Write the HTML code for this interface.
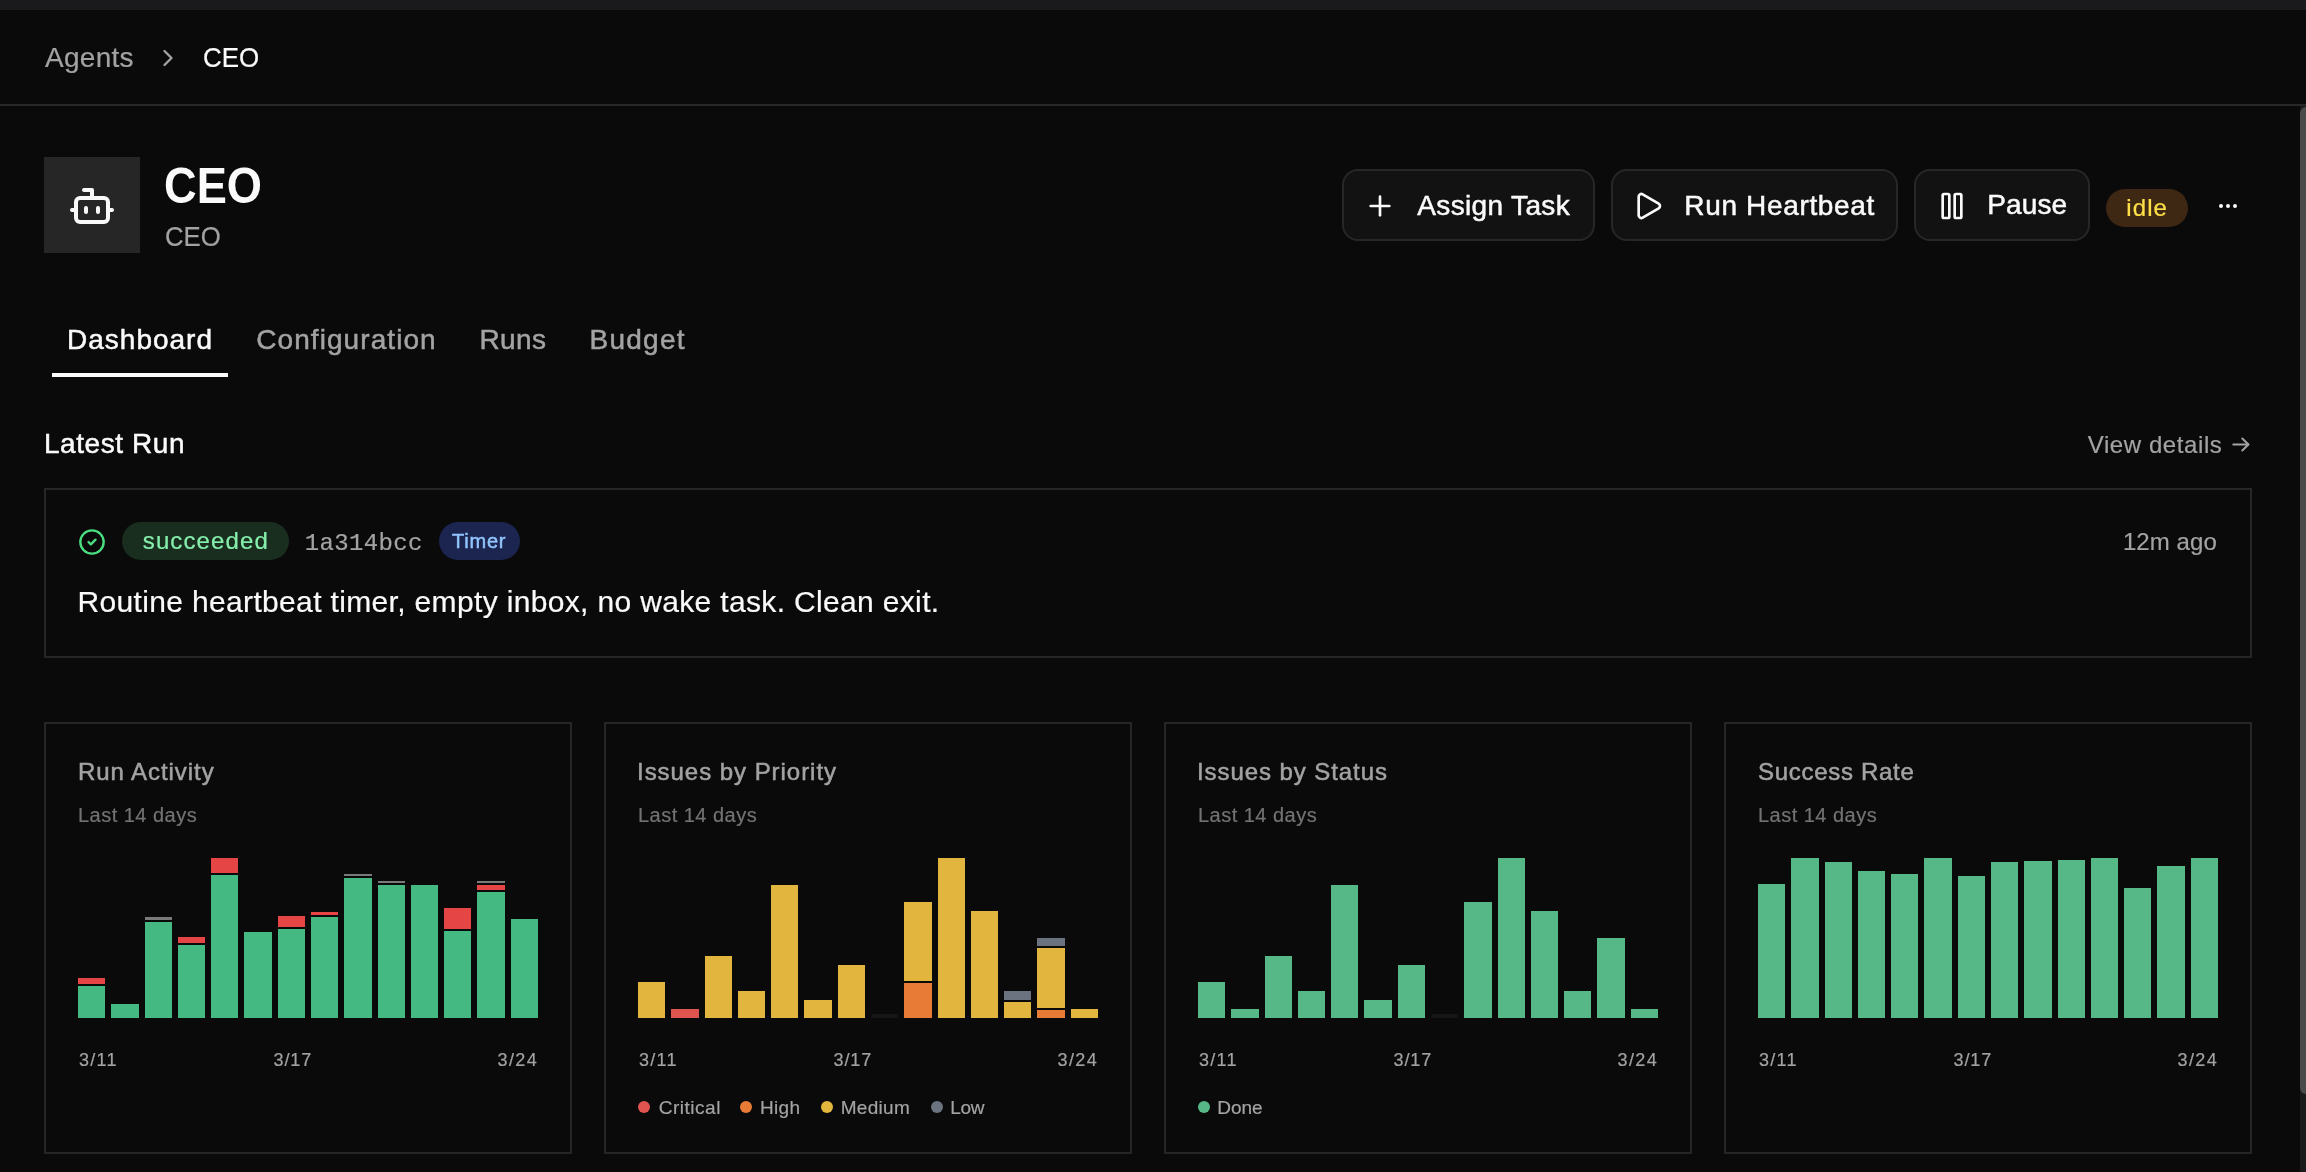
<!DOCTYPE html>
<html><head><meta charset="utf-8"><title>CEO - Agents</title>
<style>
html,body{margin:0;padding:0;width:2306px;height:1172px;overflow:hidden;background:#0a0a0a;}
body{position:relative;font-family:'Liberation Sans', sans-serif;}
.r,.t,.i{position:absolute;}
.t{white-space:nowrap;}
.txt{position:absolute;left:0;top:0;width:2306px;height:1172px;will-change:transform;}
</style></head><body>
<div class="r" style="left:0px;top:0px;width:2306px;height:10px;background:#1a1a1c;"></div>
<div class="r" style="left:0px;top:104px;width:2306px;height:2px;background:#282828;"></div>
<div class="r" style="left:2300px;top:106px;width:6px;height:1066px;background:#1a1a1a;"></div>
<div class="r" style="left:2300px;top:107px;width:12px;height:987px;background:#4a4a4a;border-radius:6px"></div>
<div class="r" style="left:44px;top:157px;width:96px;height:96px;background:#262626;"></div>
<div class="r" style="left:1342px;top:169px;width:253px;height:72px;background:#121212;border:2px solid #272727;border-radius:16px;box-sizing:border-box"></div>
<div class="r" style="left:1611px;top:169px;width:287px;height:72px;background:#121212;border:2px solid #272727;border-radius:16px;box-sizing:border-box"></div>
<div class="r" style="left:1914px;top:169px;width:176px;height:72px;background:#121212;border:2px solid #272727;border-radius:16px;box-sizing:border-box"></div>
<div class="r" style="left:2106px;top:189px;width:82px;height:38px;background:#3e2713;border-radius:19px"></div>
<div class="r" style="left:52px;top:373px;width:176px;height:4px;background:#fafafa;"></div>
<div class="r" style="left:44px;top:488px;width:2208px;height:170px;background:transparent;border:2px solid #262626;box-sizing:border-box"></div>
<div class="r" style="left:122px;top:522px;width:167px;height:38px;background:#1a2e1f;border-radius:19px"></div>
<div class="r" style="left:439px;top:522px;width:81px;height:38px;background:#1b2550;border-radius:19px"></div>
<div class="r" style="left:44px;top:722px;width:528px;height:432px;background:transparent;border:2px solid #262626;box-sizing:border-box"></div>
<div class="r" style="left:604px;top:722px;width:528px;height:432px;background:transparent;border:2px solid #262626;box-sizing:border-box"></div>
<div class="r" style="left:1164px;top:722px;width:528px;height:432px;background:transparent;border:2px solid #262626;box-sizing:border-box"></div>
<div class="r" style="left:1724px;top:722px;width:528px;height:432px;background:transparent;border:2px solid #262626;box-sizing:border-box"></div>
<div class="r" style="left:78px;top:986px;width:27px;height:32px;background:#44b982;"></div>
<div class="r" style="left:78px;top:978px;width:27px;height:6px;background:#e64545;"></div>
<div class="r" style="left:111px;top:1004px;width:28px;height:14px;background:#44b982;"></div>
<div class="r" style="left:145px;top:922px;width:27px;height:96px;background:#44b982;"></div>
<div class="r" style="left:145px;top:917px;width:27px;height:3px;background:#7a7a7a;"></div>
<div class="r" style="left:178px;top:945px;width:27px;height:73px;background:#44b982;"></div>
<div class="r" style="left:178px;top:937px;width:27px;height:6px;background:#e64545;"></div>
<div class="r" style="left:211px;top:875px;width:27px;height:143px;background:#44b982;"></div>
<div class="r" style="left:211px;top:858px;width:27px;height:15px;background:#e64545;"></div>
<div class="r" style="left:244px;top:932px;width:28px;height:86px;background:#44b982;"></div>
<div class="r" style="left:278px;top:929px;width:27px;height:89px;background:#44b982;"></div>
<div class="r" style="left:278px;top:916px;width:27px;height:11px;background:#e64545;"></div>
<div class="r" style="left:311px;top:917px;width:27px;height:101px;background:#44b982;"></div>
<div class="r" style="left:311px;top:912px;width:27px;height:3px;background:#e64545;"></div>
<div class="r" style="left:344px;top:878px;width:28px;height:140px;background:#44b982;"></div>
<div class="r" style="left:344px;top:874px;width:28px;height:2px;background:#7a7a7a;"></div>
<div class="r" style="left:378px;top:885px;width:27px;height:133px;background:#44b982;"></div>
<div class="r" style="left:378px;top:881px;width:27px;height:2px;background:#7a7a7a;"></div>
<div class="r" style="left:411px;top:885px;width:27px;height:133px;background:#44b982;"></div>
<div class="r" style="left:444px;top:931px;width:27px;height:87px;background:#44b982;"></div>
<div class="r" style="left:444px;top:908px;width:27px;height:21px;background:#e64545;"></div>
<div class="r" style="left:477px;top:892px;width:28px;height:126px;background:#44b982;"></div>
<div class="r" style="left:477px;top:885px;width:28px;height:5px;background:#e64545;"></div>
<div class="r" style="left:477px;top:881px;width:28px;height:2px;background:#7a7a7a;"></div>
<div class="r" style="left:511px;top:919px;width:27px;height:99px;background:#44b982;"></div>
<div class="r" style="left:638px;top:982px;width:27px;height:36px;background:#e2b53f;"></div>
<div class="r" style="left:671px;top:1009px;width:28px;height:9px;background:#e05450;"></div>
<div class="r" style="left:705px;top:956px;width:27px;height:62px;background:#e2b53f;"></div>
<div class="r" style="left:738px;top:991px;width:27px;height:27px;background:#e2b53f;"></div>
<div class="r" style="left:771px;top:885px;width:27px;height:133px;background:#e2b53f;"></div>
<div class="r" style="left:804px;top:1000px;width:28px;height:18px;background:#e2b53f;"></div>
<div class="r" style="left:838px;top:965px;width:27px;height:53px;background:#e2b53f;"></div>
<div class="r" style="left:871px;top:1014px;width:27px;height:4px;background:#161616;border-radius:2px"></div>
<div class="r" style="left:904px;top:983px;width:28px;height:35px;background:#e87b35;"></div>
<div class="r" style="left:904px;top:902px;width:28px;height:79px;background:#e2b53f;"></div>
<div class="r" style="left:938px;top:858px;width:27px;height:160px;background:#e2b53f;"></div>
<div class="r" style="left:971px;top:911px;width:27px;height:107px;background:#e2b53f;"></div>
<div class="r" style="left:1004px;top:1002px;width:27px;height:16px;background:#e2b53f;"></div>
<div class="r" style="left:1004px;top:991px;width:27px;height:9px;background:#6b7280;"></div>
<div class="r" style="left:1037px;top:1010px;width:28px;height:8px;background:#e87b35;"></div>
<div class="r" style="left:1037px;top:948px;width:28px;height:60px;background:#e2b53f;"></div>
<div class="r" style="left:1037px;top:938px;width:28px;height:8px;background:#6b7280;"></div>
<div class="r" style="left:1071px;top:1009px;width:27px;height:9px;background:#e2b53f;"></div>
<div class="r" style="left:1198px;top:982px;width:27px;height:36px;background:#56b886;"></div>
<div class="r" style="left:1231px;top:1009px;width:28px;height:9px;background:#56b886;"></div>
<div class="r" style="left:1265px;top:956px;width:27px;height:62px;background:#56b886;"></div>
<div class="r" style="left:1298px;top:991px;width:27px;height:27px;background:#56b886;"></div>
<div class="r" style="left:1331px;top:885px;width:27px;height:133px;background:#56b886;"></div>
<div class="r" style="left:1364px;top:1000px;width:28px;height:18px;background:#56b886;"></div>
<div class="r" style="left:1398px;top:965px;width:27px;height:53px;background:#56b886;"></div>
<div class="r" style="left:1431px;top:1014px;width:27px;height:4px;background:#161616;border-radius:2px"></div>
<div class="r" style="left:1464px;top:902px;width:28px;height:116px;background:#56b886;"></div>
<div class="r" style="left:1498px;top:858px;width:27px;height:160px;background:#56b886;"></div>
<div class="r" style="left:1531px;top:911px;width:27px;height:107px;background:#56b886;"></div>
<div class="r" style="left:1564px;top:991px;width:27px;height:27px;background:#56b886;"></div>
<div class="r" style="left:1597px;top:938px;width:28px;height:80px;background:#56b886;"></div>
<div class="r" style="left:1631px;top:1009px;width:27px;height:9px;background:#56b886;"></div>
<div class="r" style="left:1758px;top:884px;width:27px;height:134px;background:#56b886;"></div>
<div class="r" style="left:1791px;top:858px;width:28px;height:160px;background:#56b886;"></div>
<div class="r" style="left:1825px;top:862px;width:27px;height:156px;background:#56b886;"></div>
<div class="r" style="left:1858px;top:871px;width:27px;height:147px;background:#56b886;"></div>
<div class="r" style="left:1891px;top:874px;width:27px;height:144px;background:#56b886;"></div>
<div class="r" style="left:1924px;top:858px;width:28px;height:160px;background:#56b886;"></div>
<div class="r" style="left:1958px;top:876px;width:27px;height:142px;background:#56b886;"></div>
<div class="r" style="left:1991px;top:862px;width:27px;height:156px;background:#56b886;"></div>
<div class="r" style="left:2024px;top:861px;width:28px;height:157px;background:#56b886;"></div>
<div class="r" style="left:2058px;top:860px;width:27px;height:158px;background:#56b886;"></div>
<div class="r" style="left:2091px;top:858px;width:27px;height:160px;background:#56b886;"></div>
<div class="r" style="left:2124px;top:888px;width:27px;height:130px;background:#56b886;"></div>
<div class="r" style="left:2157px;top:866px;width:28px;height:152px;background:#56b886;"></div>
<div class="r" style="left:2191px;top:858px;width:27px;height:160px;background:#56b886;"></div>
<div class="r" style="left:638px;top:1101px;width:12px;height:12px;background:#e05450;border-radius:50%"></div>
<div class="r" style="left:740px;top:1101px;width:12px;height:12px;background:#e87b35;border-radius:50%"></div>
<div class="r" style="left:821px;top:1101px;width:12px;height:12px;background:#e2b53f;border-radius:50%"></div>
<div class="r" style="left:931px;top:1101px;width:12px;height:12px;background:#6b7280;border-radius:50%"></div>
<div class="r" style="left:1198px;top:1101px;width:12px;height:12px;background:#56b886;border-radius:50%"></div>
<svg class="i" style="left:153.5px;top:44.2px" width="28" height="28" viewBox="0 0 24 24" fill="none" stroke="#a3a3a3" stroke-width="2" stroke-linecap="round" stroke-linejoin="round"><path d="m9 18 6-6-6-6"/></svg>
<svg class="i" style="left:68px;top:182px" width="48" height="48" viewBox="0 0 24 24" fill="none" stroke="#fafafa" stroke-width="2" stroke-linecap="round" stroke-linejoin="round"><path d="M12 8V4H8"/><rect width="16" height="12" x="4" y="8" rx="2"/><path d="M2 14h2"/><path d="M20 14h2"/><path d="M15 13v2"/><path d="M9 13v2"/></svg>
<svg class="i" style="left:1364px;top:190px" width="32" height="32" viewBox="0 0 24 24" fill="none" stroke="#fafafa" stroke-width="2" stroke-linecap="round" stroke-linejoin="round"><path d="M5 12h14"/><path d="M12 5v14"/></svg>
<svg class="i" style="left:1632px;top:190px" width="32" height="32" viewBox="0 0 24 24" fill="none" stroke="#fafafa" stroke-width="2" stroke-linecap="round" stroke-linejoin="round"><path d="M5 5a2 2 0 0 1 3.008-1.728l11.997 6.998a2 2 0 0 1 .003 3.458l-12 7A2 2 0 0 1 5 19z"/></svg>
<svg class="i" style="left:1936px;top:190px" width="32" height="32" viewBox="0 0 24 24" fill="none" stroke="#fafafa" stroke-width="2" stroke-linecap="round" stroke-linejoin="round"><rect x="14" y="3" width="5" height="18" rx="1"/><rect x="5" y="3" width="5" height="18" rx="1"/></svg>
<svg class="i" style="left:2216px;top:194px" width="24" height="24" viewBox="0 0 24 24" fill="none" stroke="#fafafa" stroke-width="2" stroke-linecap="round" stroke-linejoin="round"><circle cx="12" cy="12" r="1"/><circle cx="19" cy="12" r="1"/><circle cx="5" cy="12" r="1"/></svg>
<svg class="i" style="left:78px;top:528px" width="28" height="28" viewBox="0 0 24 24" fill="none" stroke="#4ade80" stroke-width="2" stroke-linecap="round" stroke-linejoin="round"><circle cx="12" cy="12" r="10"/><path d="m9 12 2 2 4-4"/></svg>
<svg class="i" style="left:2225px;top:430px" width="30" height="30" viewBox="0 0 30 30" fill="none" stroke="#a3a3a3" stroke-width="2" stroke-linecap="round" stroke-linejoin="round"><path d="M8.3 14.5H23.3"/><path d="M17.3 8.5 23.4 14.5 17.3 20.5"/></svg>
<div class="txt">
<div class="t" style="left:45.00px;top:43.50px;font:400 28px/28px 'Liberation Sans', sans-serif;color:#a3a3a3;letter-spacing:0.286px;-webkit-text-stroke:0.2px #a3a3a3">Agents</div>
<div class="t" style="left:202.57px;top:43.70px;font:400 28px/28px 'Liberation Sans', sans-serif;color:#fafafa;transform:scaleX(0.9254);transform-origin:0 0;-webkit-text-stroke:0.2px #fafafa">CEO</div>
<div class="t" style="left:164.09px;top:160.60px;font:700 50px/50px 'Liberation Sans', sans-serif;color:#fafafa;transform:scaleX(0.9047);transform-origin:0 0">CEO</div>
<div class="t" style="left:164.68px;top:222.80px;font:400 28px/28px 'Liberation Sans', sans-serif;color:#a3a3a3;transform:scaleX(0.9203);transform-origin:0 0;-webkit-text-stroke:0.2px #a3a3a3">CEO</div>
<div class="t" style="left:1417.30px;top:191.60px;font:400 28px/28px 'Liberation Sans', sans-serif;color:#fafafa;letter-spacing:0.351px;-webkit-text-stroke:0.5px #fafafa">Assign Task</div>
<div class="t" style="left:1684.30px;top:191.80px;font:400 28px/28px 'Liberation Sans', sans-serif;color:#fafafa;letter-spacing:0.656px;-webkit-text-stroke:0.5px #fafafa">Run Heartbeat</div>
<div class="t" style="left:1987.20px;top:191.40px;font:400 28px/28px 'Liberation Sans', sans-serif;color:#fafafa;letter-spacing:0.145px;-webkit-text-stroke:0.5px #fafafa">Pause</div>
<div class="t" style="left:2126.30px;top:196.40px;font:400 24px/24px 'Liberation Sans', sans-serif;color:#fde047;letter-spacing:1.096px;-webkit-text-stroke:0.2px #fde047">idle</div>
<div class="t" style="left:67.10px;top:326.20px;font:400 28px/28px 'Liberation Sans', sans-serif;color:#fafafa;letter-spacing:0.987px;-webkit-text-stroke:0.5px #fafafa">Dashboard</div>
<div class="t" style="left:256.20px;top:326.20px;font:400 28px/28px 'Liberation Sans', sans-serif;color:#a3a3a3;letter-spacing:1.077px;-webkit-text-stroke:0.5px #a3a3a3">Configuration</div>
<div class="t" style="left:479.40px;top:326.30px;font:400 28px/28px 'Liberation Sans', sans-serif;color:#a3a3a3;letter-spacing:0.378px;-webkit-text-stroke:0.5px #a3a3a3">Runs</div>
<div class="t" style="left:589.60px;top:326.30px;font:400 28px/28px 'Liberation Sans', sans-serif;color:#a3a3a3;letter-spacing:1.227px;-webkit-text-stroke:0.5px #a3a3a3">Budget</div>
<div class="t" style="left:43.90px;top:430.00px;font:400 28px/28px 'Liberation Sans', sans-serif;color:#fafafa;letter-spacing:0.584px;-webkit-text-stroke:0.5px #fafafa">Latest Run</div>
<div class="t" style="left:2087.80px;top:432.50px;font:400 24px/24px 'Liberation Sans', sans-serif;color:#a3a3a3;letter-spacing:0.579px;-webkit-text-stroke:0.2px #a3a3a3">View details</div>
<div class="t" style="left:142.80px;top:529.40px;font:400 24px/24px 'Liberation Sans', sans-serif;color:#86efac;letter-spacing:1.108px;-webkit-text-stroke:0.2px #86efac">succeeded</div>
<div class="t" style="left:304.70px;top:531.60px;font:400 24px/24px 'Liberation Mono', monospace;color:#a3a3a3;letter-spacing:0.355px;-webkit-text-stroke:0.2px #a3a3a3">1a314bcc</div>
<div class="t" style="left:452.10px;top:530.90px;font:400 20px/20px 'Liberation Sans', sans-serif;color:#93c5fd;letter-spacing:0.750px;-webkit-text-stroke:0.5px #93c5fd">Timer</div>
<div class="t" style="left:2122.90px;top:529.50px;font:400 24px/24px 'Liberation Sans', sans-serif;color:#a3a3a3;letter-spacing:0.075px;-webkit-text-stroke:0.2px #a3a3a3">12m ago</div>
<div class="t" style="left:77.50px;top:586.80px;font:400 30px/30px 'Liberation Sans', sans-serif;color:#fafafa;letter-spacing:0.342px;-webkit-text-stroke:0.2px #fafafa">Routine heartbeat timer, empty inbox, no wake task. Clean exit.</div>
<div class="t" style="left:78.00px;top:759.60px;font:400 24px/24px 'Liberation Sans', sans-serif;color:#a3a3a3;letter-spacing:0.936px;-webkit-text-stroke:0.5px #a3a3a3">Run Activity</div>
<div class="t" style="left:78.00px;top:805.20px;font:400 20px/20px 'Liberation Sans', sans-serif;color:#737373;letter-spacing:0.481px;-webkit-text-stroke:0.2px #737373">Last 14 days</div>
<div class="t" style="left:79.00px;top:1051.00px;font:400 18px/18px 'Liberation Sans', sans-serif;color:#a3a3a3;letter-spacing:1.238px;-webkit-text-stroke:0.2px #a3a3a3">3/11</div>
<div class="t" style="left:273.50px;top:1051.00px;font:400 18px/18px 'Liberation Sans', sans-serif;color:#a3a3a3;letter-spacing:0.893px;-webkit-text-stroke:0.2px #a3a3a3">3/17</div>
<div class="t" style="left:497.50px;top:1051.00px;font:400 18px/18px 'Liberation Sans', sans-serif;color:#a3a3a3;letter-spacing:1.426px;-webkit-text-stroke:0.2px #a3a3a3">3/24</div>
<div class="t" style="left:637.00px;top:759.60px;font:400 24px/24px 'Liberation Sans', sans-serif;color:#a3a3a3;letter-spacing:0.958px;-webkit-text-stroke:0.5px #a3a3a3">Issues by Priority</div>
<div class="t" style="left:638.00px;top:805.20px;font:400 20px/20px 'Liberation Sans', sans-serif;color:#737373;letter-spacing:0.481px;-webkit-text-stroke:0.2px #737373">Last 14 days</div>
<div class="t" style="left:639.00px;top:1051.00px;font:400 18px/18px 'Liberation Sans', sans-serif;color:#a3a3a3;letter-spacing:1.238px;-webkit-text-stroke:0.2px #a3a3a3">3/11</div>
<div class="t" style="left:833.50px;top:1051.00px;font:400 18px/18px 'Liberation Sans', sans-serif;color:#a3a3a3;letter-spacing:0.893px;-webkit-text-stroke:0.2px #a3a3a3">3/17</div>
<div class="t" style="left:1057.50px;top:1051.00px;font:400 18px/18px 'Liberation Sans', sans-serif;color:#a3a3a3;letter-spacing:1.426px;-webkit-text-stroke:0.2px #a3a3a3">3/24</div>
<div class="t" style="left:1197.00px;top:759.60px;font:400 24px/24px 'Liberation Sans', sans-serif;color:#a3a3a3;letter-spacing:0.921px;-webkit-text-stroke:0.5px #a3a3a3">Issues by Status</div>
<div class="t" style="left:1198.00px;top:805.20px;font:400 20px/20px 'Liberation Sans', sans-serif;color:#737373;letter-spacing:0.481px;-webkit-text-stroke:0.2px #737373">Last 14 days</div>
<div class="t" style="left:1199.00px;top:1051.00px;font:400 18px/18px 'Liberation Sans', sans-serif;color:#a3a3a3;letter-spacing:1.238px;-webkit-text-stroke:0.2px #a3a3a3">3/11</div>
<div class="t" style="left:1393.50px;top:1051.00px;font:400 18px/18px 'Liberation Sans', sans-serif;color:#a3a3a3;letter-spacing:0.893px;-webkit-text-stroke:0.2px #a3a3a3">3/17</div>
<div class="t" style="left:1617.50px;top:1051.00px;font:400 18px/18px 'Liberation Sans', sans-serif;color:#a3a3a3;letter-spacing:1.426px;-webkit-text-stroke:0.2px #a3a3a3">3/24</div>
<div class="t" style="left:1758.00px;top:759.60px;font:400 24px/24px 'Liberation Sans', sans-serif;color:#a3a3a3;letter-spacing:0.698px;-webkit-text-stroke:0.5px #a3a3a3">Success Rate</div>
<div class="t" style="left:1758.00px;top:805.20px;font:400 20px/20px 'Liberation Sans', sans-serif;color:#737373;letter-spacing:0.481px;-webkit-text-stroke:0.2px #737373">Last 14 days</div>
<div class="t" style="left:1759.00px;top:1051.00px;font:400 18px/18px 'Liberation Sans', sans-serif;color:#a3a3a3;letter-spacing:1.238px;-webkit-text-stroke:0.2px #a3a3a3">3/11</div>
<div class="t" style="left:1953.50px;top:1051.00px;font:400 18px/18px 'Liberation Sans', sans-serif;color:#a3a3a3;letter-spacing:0.893px;-webkit-text-stroke:0.2px #a3a3a3">3/17</div>
<div class="t" style="left:2177.50px;top:1051.00px;font:400 18px/18px 'Liberation Sans', sans-serif;color:#a3a3a3;letter-spacing:1.426px;-webkit-text-stroke:0.2px #a3a3a3">3/24</div>
<div class="t" style="left:658.70px;top:1098.40px;font:400 19px/19px 'Liberation Sans', sans-serif;color:#a3a3a3;letter-spacing:0.523px;-webkit-text-stroke:0.2px #a3a3a3">Critical</div>
<div class="t" style="left:759.90px;top:1098.40px;font:400 19px/19px 'Liberation Sans', sans-serif;color:#a3a3a3;letter-spacing:0.330px;-webkit-text-stroke:0.2px #a3a3a3">High</div>
<div class="t" style="left:840.70px;top:1098.40px;font:400 19px/19px 'Liberation Sans', sans-serif;color:#a3a3a3;letter-spacing:0.310px;-webkit-text-stroke:0.2px #a3a3a3">Medium</div>
<div class="t" style="left:950.20px;top:1098.40px;font:400 19px/19px 'Liberation Sans', sans-serif;color:#a3a3a3;letter-spacing:-0.267px;-webkit-text-stroke:0.2px #a3a3a3">Low</div>
<div class="t" style="left:1217.30px;top:1098.40px;font:400 19px/19px 'Liberation Sans', sans-serif;color:#a3a3a3;letter-spacing:-0.018px;-webkit-text-stroke:0.2px #a3a3a3">Done</div>
</div>
</body></html>
